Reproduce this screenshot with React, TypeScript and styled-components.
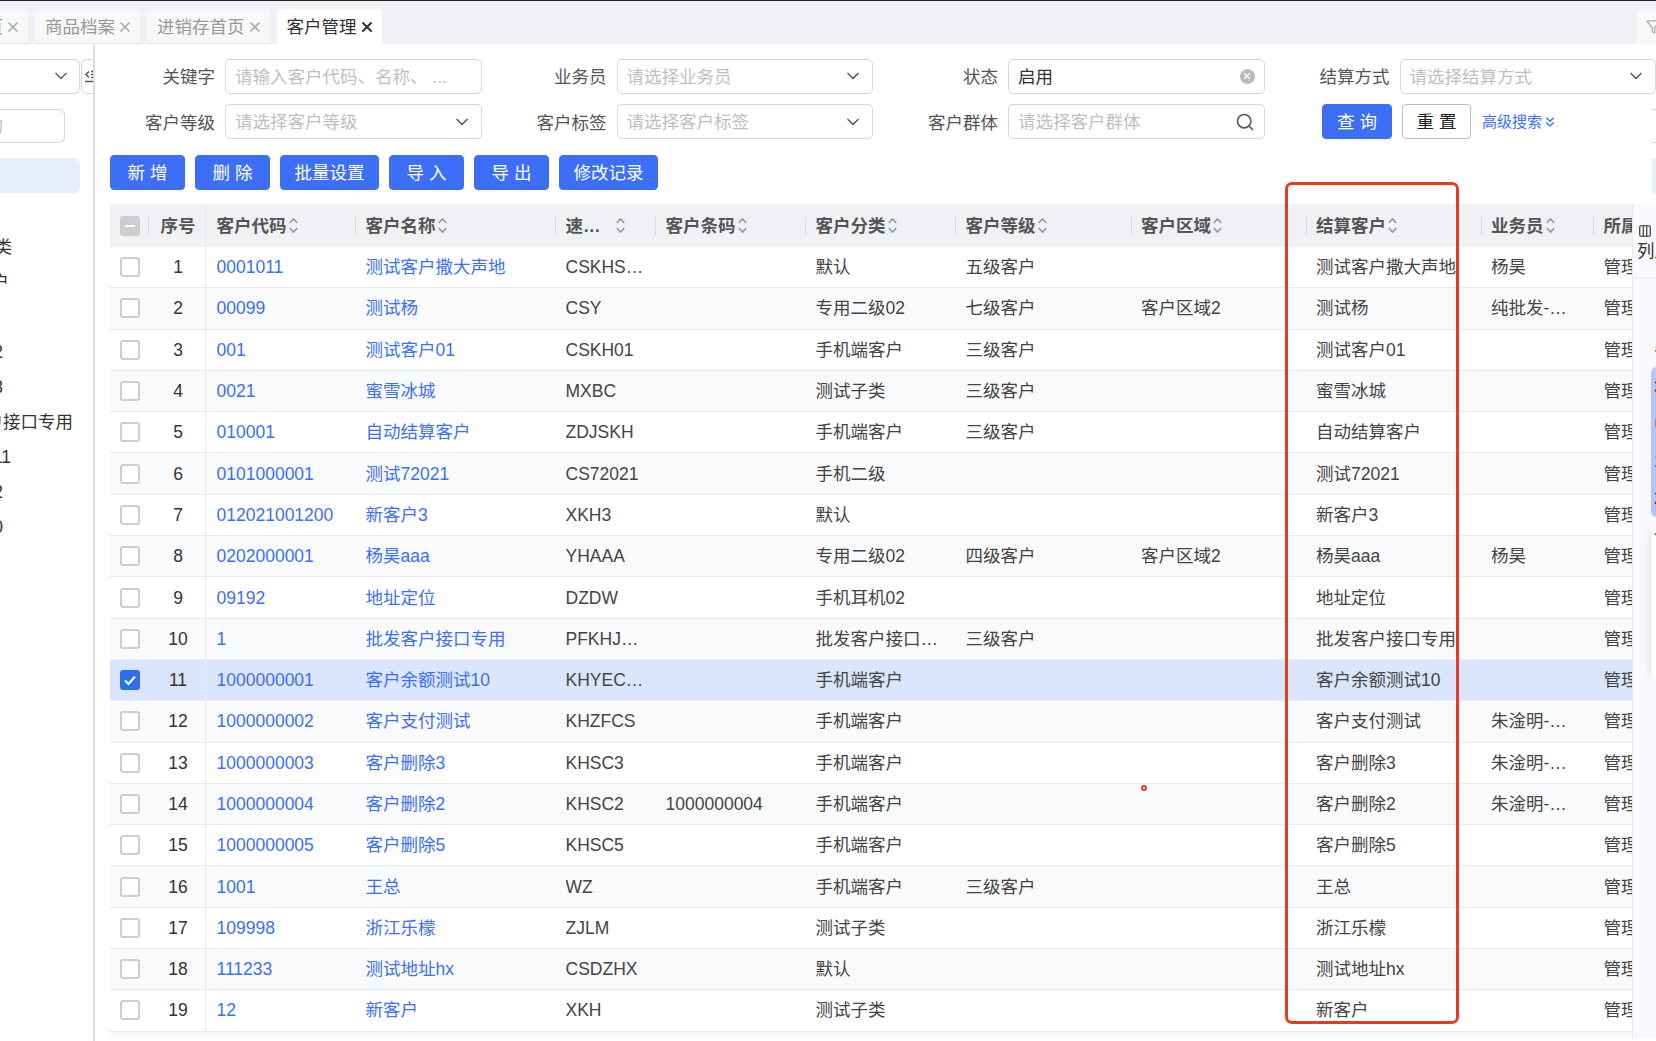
import styled, { createGlobalStyle } from "styled-components"
import { ChevronDown, ChevronsDown, Columns3, Filter, Search, X } from "lucide-react"

const Colors = {
  Blue: "#3c6ff5",
  Line: "#e8e9eb",
  Border: "#d6d6d6",
  HeadBg: "#f0f1f4",
  Stripe: "#f9fafb",
  Selected: "#dbe5fd",
  Placeholder: "#bfbfbf",
  Text: "#444",
  Red: "#e23d20",
}

const GlobalStyle = createGlobalStyle`
  html, body {
    margin: 0;
    height: 100%;
    overflow: hidden;
    background: #fff;
  }
  * { box-sizing: border-box; }
`

const Page = styled.div`
  width: 1656px;
  height: 1041px;
  overflow: hidden;
  display: flex;
  flex-direction: column;
  border-top: 1px solid #222;
  color: ${Colors.Text};
  font-family: "Liberation Sans", "Noto Sans CJK SC", sans-serif;
  font-size: 17.5px;
  line-height: 20px;
`

const TabBar = styled.div`
  height: 43px;
  flex-shrink: 0;
  display: flex;
  align-items: flex-end;
  gap: 7px;
  background: ${Colors.HeadBg};
`

const Tab = styled.div<{ $active?: boolean; $first?: boolean }>`
  height: 35px;
  flex-shrink: 0;
  display: flex;
  align-items: center;
  gap: 2px;
  padding: 1px 7px 0 10px;
  margin-left: ${props => props.$first ? -42 : 0}px;
  border-radius: 4px 4px 0 0;
  white-space: nowrap;
  background: ${props => props.$active ? "#fff" : "#f7f8f9"};
  border-bottom: 1px solid ${props => props.$active ? "#fff" : "#e4e5e7"};
  color: ${props => props.$active ? "#333" : "#999"};
  svg { color: ${props => props.$active ? "#333" : "#aaa"}; }
`

const FilterTab = styled.div`
  width: 19px;
  height: 35px;
  margin-left: auto;
  padding-left: 9px;
  display: flex;
  align-items: center;
  overflow: hidden;
  flex-shrink: 0;
  background: #f7f8f9;
  border-radius: 4px 0 0 0;
  color: #aaa;
  svg { flex-shrink: 0; }
`

const Body = styled.div`
  flex: 1;
  min-height: 0;
  display: flex;
`

const SidePanel = styled.aside`
  width: 95px;
  flex-shrink: 0;
  overflow: hidden;
  padding-top: 15px;
  display: flex;
  flex-direction: column;
  border-right: 2px solid #dcdcdc;
`

const SideTop = styled.div`
  display: flex;
  gap: 1px;
`

const SideSelect = styled.div`
  width: 80px;
  height: 34.5px;
  flex-shrink: 0;
  padding-right: 8px;
  display: flex;
  align-items: center;
  justify-content: flex-end;
  border: 1px solid ${Colors.Border};
  border-left: none;
  border-radius: 0 6px 6px 0;
  color: #666;
`

const CollapseButton = styled.div`
  width: 20px;
  height: 34.5px;
  flex-shrink: 0;
  padding-left: 3px;
  display: flex;
  align-items: center;
  border: 1px solid ${Colors.Border};
  border-radius: 6px;
  svg { flex-shrink: 0; }
`

const SideSearch = styled.div`
  width: 65px;
  height: 34.5px;
  margin-top: 15px;
  display: flex;
  align-items: center;
  justify-content: flex-end;
  overflow: hidden;
  padding-right: 61px;
  border: 1px solid ${Colors.Border};
  border-left: none;
  border-radius: 0 6px 6px 0;
  color: ${Colors.Placeholder};
  white-space: nowrap;
  span { flex-shrink: 0; }
`

const SideActive = styled.div`
  width: 80px;
  height: 35px;
  margin-top: 15px;
  background: #e8edfc;
  border-radius: 0 6px 6px 0;
`

const SideTree = styled.div`
  margin-top: 36px;
  display: flex;
  flex-direction: column;
`

const TreeItem = styled.div<{ $right: number }>`
  width: ${props => props.$right}px;
  height: 35px;
  display: flex;
  align-items: center;
  justify-content: flex-end;
  white-space: nowrap;
  color: #333;
  span { flex-shrink: 0; }
`

const Main = styled.main`
  position: relative;
  flex: 1;
  min-width: 0;
  padding: 15px 0 0 10px;
  display: flex;
  flex-direction: column;
`

const FilterForm = styled.div`
  display: grid;
  grid-template-columns: repeat(4, 376.5px);
  column-gap: 15px;
  row-gap: 10.5px;
`

const Field = styled.div`
  display: flex;
  align-items: center;
  gap: 10px;
`

const FieldLabel = styled.label`
  width: 110px;
  flex-shrink: 0;
  padding-top: 2px;
  text-align: right;
  color: #555;
  white-space: nowrap;
`

const Control = styled.div<{ $empty?: boolean }>`
  width: 256.5px;
  height: 34.5px;
  padding: 1.5px 9px 0 9px;
  flex-shrink: 0;
  display: flex;
  align-items: center;
  justify-content: space-between;
  gap: 6px;
  background: #fff;
  border: 1px solid ${Colors.Border};
  border-radius: 5px;
  color: ${props => props.$empty ? Colors.Placeholder : "#333"};
  white-space: nowrap;
  svg { flex-shrink: 0; color: #5c5c5c; margin-top: -1.5px; }
`

const ClearIcon = styled.span`
  width: 15px;
  height: 15px;
  margin-top: -1.5px;
  display: flex;
  align-items: center;
  justify-content: center;
  border-radius: 50%;
  background: #bbb;
  svg { color: #fff; margin: 0; }
`

const FormActions = styled.div`
  display: flex;
  align-items: center;
  padding-left: 42.5px;
`

const Button = styled.button<{ $outline?: boolean }>`
  height: 35px;
  min-width: 75px;
  padding: 1px 13.5px 0;
  border: 1px solid ${props => props.$outline ? "#bdbdbd" : Colors.Blue};
  border-radius: 4px;
  background: ${props => props.$outline ? "#fff" : Colors.Blue};
  color: ${props => props.$outline ? "#222" : "#fff"};
  font: inherit;
  white-space: nowrap;
`

const Spaced = styled.span`
  letter-spacing: 5px;
  margin-right: -5px;
`

const QueryButton = styled(Button)`
  min-width: 70px;
  margin-right: 10px;
`

const ResetButton = styled(Button)`
  min-width: 68px;
  margin-right: 11px;
`

const AdvancedLink = styled.a`
  display: flex;
  align-items: center;
  font-size: 15px;
  color: ${Colors.Blue};
  white-space: nowrap;
`

const Toolbar = styled.div`
  margin: 15.5px 0 0 5px;
  display: flex;
  gap: 10px;
`

const TableArea = styled.div`
  flex: 1;
  min-height: 0;
  margin: 14.5px 0 3px 5px;
  display: flex;
`

const Table = styled.div`
  width: 1522px;
  flex-shrink: 0;
  overflow: hidden;
`

const columns = "38px 57px 150px 200px 100px 150px 150px 175.5px 175px 175px 112.5px 39px"

const HeadRow = styled.div`
  height: 43px;
  display: grid;
  grid-template-columns: ${columns};
  background: ${Colors.HeadBg};
`

const HeadCell = styled.div<{ $divider?: boolean; $full?: boolean; $center?: boolean }>`
  position: relative;
  min-width: 0;
  display: flex;
  align-items: center;
  gap: 1px;
  padding-left: ${props => props.$center ? 3 : 10.5}px;
  justify-content: ${props => props.$center ? "center" : "flex-start"};
  overflow: hidden;
  white-space: nowrap;
  font-weight: 700;
  color: #555;
  border-left: ${props => props.$full ? `1px solid ${Colors.Line}` : "none"};
  &::before {
    content: "";
    display: ${props => props.$divider ? "block" : "none"};
    position: absolute;
    left: 0;
    top: 13px;
    width: 1px;
    height: 17px;
    background: #d9d9d9;
  }
`

const CheckHead = styled(HeadCell)`
  padding-left: 10px;
`

const ShortLabel = styled.span`
  width: 46px;
  flex-shrink: 0;
  overflow: hidden;
  text-overflow: ellipsis;
  margin-right: 2px;
`

const Row = styled.div<{ $selected?: boolean; $striped?: boolean }>`
  height: 41.3px;
  display: grid;
  grid-template-columns: ${columns};
  border-bottom: 1px solid ${Colors.Line};
  background: ${props => props.$selected ? Colors.Selected : props.$striped ? Colors.Stripe : "#fff"};
`

const Cell = styled.div<{ $divider?: boolean; $narrow?: boolean }>`
  min-width: 0;
  display: flex;
  align-items: center;
  padding: 0 ${props => props.$narrow ? 24 : 8}px 0 10.5px;
  overflow: hidden;
  border-left: ${props => props.$divider ? `1px solid ${Colors.Line}` : "none"};
`

const CellText = styled.span`
  overflow: hidden;
  text-overflow: ellipsis;
  white-space: nowrap;
`

const Clipped = styled.span`
  white-space: nowrap;
  flex-shrink: 0;
`

const LinkText = styled(CellText)`
  color: ${Colors.Blue};
`

const CheckCell = styled.div`
  display: flex;
  align-items: center;
  padding-left: 10px;
`

const SeqCell = styled.div`
  display: flex;
  align-items: center;
  justify-content: center;
  padding-left: 3px;
  color: #333;
`

const Checkbox = styled.span<{ $checked?: boolean; $mixed?: boolean }>`
  width: 20px;
  height: 20px;
  display: flex;
  align-items: center;
  justify-content: center;
  border-radius: 3px;
  border: 2px solid ${props => props.$checked ? "#2f6df0" : "#cdcdcd"};
  background: ${props => props.$checked ? "#2f6df0" : props.$mixed ? "#cdcdcd" : "#fff"};
`

const ColumnStrip = styled.div`
  position: relative;
  flex: 1;
  min-width: 0;
  overflow: hidden;
  background: #f8f9fd;
  border-left: 1px solid ${Colors.Line};
`

const StripHead = styled.div`
  height: 74px;
  padding: 20px 0 0 4px;
  border-bottom: 1px solid ${Colors.Line};
  white-space: nowrap;
  color: #333;
  line-height: 22px;
  svg { display: block; margin: 0 0 2px 1px; }
`

const StripBar = styled.div`
  position: absolute;
  left: 18px;
  top: 163px;
  width: 6px;
  height: 150px;
  background: #b3c3fb;
  border-radius: 6px 0 0 6px;
`

const StripCard = styled.div`
  position: absolute;
  left: 18px;
  top: 326px;
  width: 6px;
  height: 147px;
  background: #fff;
  border-radius: 6px 0 0 6px;
  box-shadow: -2px 0 6px rgba(60, 70, 110, 0.12);
`

const StripLabels = styled.div`
  position: absolute;
  left: 21px;
  top: 128px;
  display: flex;
  flex-direction: column;
  color: #333;
  line-height: 37px;
  white-space: nowrap;
`

const EdgeBox = styled.div`
  position: absolute;
  right: 0;
  top: 65px;
  width: 4px;
  height: 34px;
  background: #fff;
  border-top: 1px solid ${Colors.Border};
  border-bottom: 1px solid ${Colors.Border};
`

const EdgeActive = styled.div`
  position: absolute;
  right: 0;
  top: 115px;
  width: 4px;
  height: 35px;
  background: #e8edfc;
`

const Highlight = styled.div`
  position: absolute;
  left: 1189.5px;
  top: 138px;
  width: 174.5px;
  height: 842px;
  border: 3.5px solid ${Colors.Red};
  border-radius: 7px;
  pointer-events: none;
`

const CursorDot = styled.div`
  position: absolute;
  left: 1046px;
  top: 741px;
  width: 6px;
  height: 6px;
  border: 2px solid ${Colors.Red};
  border-radius: 50%;
`

const SortIcon = () => (
  <svg width="11" height="19" viewBox="0 0 10 18" fill="none" stroke="#999" strokeWidth="1.5" style={{ flexShrink: 0 }}>
    <path d="M1.5 6.5 5 2.8l3.5 3.7" />
    <path d="M1.5 11.5 5 15.2l3.5-3.7" />
  </svg>
)

const CollapseIcon = () => (
  <svg width="16" height="16" viewBox="0 0 16 16" fill="none" stroke="#555" strokeWidth="1.6">
    <path d="M4 3.5.9 6.5 4 9.5" />
    <path d="M6 3.5h9M6 6.5h9M6 9.5h9M0 13.5h15" />
  </svg>
)

const ClearGlyph = () => (
  <ClearIcon>
    <X size={10} strokeWidth={3} />
  </ClearIcon>
)

interface Customer {
  code: string
  name: string
  quick: string
  barcode?: string
  category: string
  grade?: string
  area?: string
  settle: string
  sales?: string
}

const customers: Customer[] = [
  { code: "0001011", name: "测试客户撒大声地", quick: "CSKHSDSD", category: "默认", grade: "五级客户", settle: "测试客户撒大声地", sales: "杨昊" },
  { code: "00099", name: "测试杨", quick: "CSY", category: "专用二级02", grade: "七级客户", area: "客户区域2", settle: "测试杨", sales: "纯批发-测试员" },
  { code: "001", name: "测试客户01", quick: "CSKH01", category: "手机端客户", grade: "三级客户", settle: "测试客户01" },
  { code: "0021", name: "蜜雪冰城", quick: "MXBC", category: "测试子类", grade: "三级客户", settle: "蜜雪冰城" },
  { code: "010001", name: "自动结算客户", quick: "ZDJSKH", category: "手机端客户", grade: "三级客户", settle: "自动结算客户" },
  { code: "0101000001", name: "测试72021", quick: "CS72021", category: "手机二级", settle: "测试72021" },
  { code: "012021001200", name: "新客户3", quick: "XKH3", category: "默认", settle: "新客户3" },
  { code: "0202000001", name: "杨昊aaa", quick: "YHAAA", category: "专用二级02", grade: "四级客户", area: "客户区域2", settle: "杨昊aaa", sales: "杨昊" },
  { code: "09192", name: "地址定位", quick: "DZDW", category: "手机耳机02", settle: "地址定位" },
  { code: "1", name: "批发客户接口专用", quick: "PFKHJKZY", category: "批发客户接口专用", grade: "三级客户", settle: "批发客户接口专用" },
  { code: "1000000001", name: "客户余额测试10", quick: "KHYECS10", category: "手机端客户", settle: "客户余额测试10" },
  { code: "1000000002", name: "客户支付测试", quick: "KHZFCS", category: "手机端客户", settle: "客户支付测试", sales: "朱淦明-测试" },
  { code: "1000000003", name: "客户删除3", quick: "KHSC3", category: "手机端客户", settle: "客户删除3", sales: "朱淦明-测试" },
  { code: "1000000004", name: "客户删除2", quick: "KHSC2", barcode: "1000000004", category: "手机端客户", settle: "客户删除2", sales: "朱淦明-测试" },
  { code: "1000000005", name: "客户删除5", quick: "KHSC5", category: "手机端客户", settle: "客户删除5" },
  { code: "1001", name: "王总", quick: "WZ", category: "手机端客户", grade: "三级客户", settle: "王总" },
  { code: "109998", name: "浙江乐檬", quick: "ZJLM", category: "测试子类", settle: "浙江乐檬" },
  { code: "111233", name: "测试地址hx", quick: "CSDZHX", category: "默认", settle: "测试地址hx" },
  { code: "12", name: "新客户", quick: "XKH", category: "测试子类", settle: "新客户" },
]

const sortableColumns = ["客户条码", "客户分类", "客户等级", "客户区域", "结算客户", "业务员"]

const App = () => {
  return (
    <Page>
      <GlobalStyle />
      <TabBar>
        <Tab $first>首页<X size={16} strokeWidth={2.5} /></Tab>
        <Tab>商品档案<X size={16} strokeWidth={2.5} /></Tab>
        <Tab>进销存首页<X size={16} strokeWidth={2.5} /></Tab>
        <Tab $active>客户管理<X size={16} strokeWidth={3} /></Tab>
        <FilterTab><Filter size={15} /></FilterTab>
      </TabBar>
      <Body>
        <SidePanel>
          <SideTop>
            <SideSelect><ChevronDown size={20} /></SideSelect>
            <CollapseButton><CollapseIcon /></CollapseButton>
          </SideTop>
          <SideSearch><span>请输入查询</span></SideSearch>
          <SideActive />
          <SideTree>
            <TreeItem $right={12}><span>客户分类</span></TreeItem>
            <TreeItem $right={9}><span>零售客户</span></TreeItem>
            <TreeItem $right={0} />
            <TreeItem $right={3}><span>专用二级02</span></TreeItem>
            <TreeItem $right={3}><span>手机二级03</span></TreeItem>
            <TreeItem $right={73}><span>批发客户接口专用</span></TreeItem>
            <TreeItem $right={11}><span>手机耳机11</span></TreeItem>
            <TreeItem $right={3}><span>手机耳机02</span></TreeItem>
            <TreeItem $right={3}><span>测试客户10</span></TreeItem>
          </SideTree>
        </SidePanel>
        <Main>
          <FilterForm>
            <Field>
              <FieldLabel>关键字</FieldLabel>
              <Control $empty>请输入客户代码、名称、 ...</Control>
            </Field>
            <Field>
              <FieldLabel>业务员</FieldLabel>
              <Control $empty>请选择业务员<ChevronDown size={20} /></Control>
            </Field>
            <Field>
              <FieldLabel>状态</FieldLabel>
              <Control>启用<ClearGlyph /></Control>
            </Field>
            <Field>
              <FieldLabel>结算方式</FieldLabel>
              <Control $empty>请选择结算方式<ChevronDown size={20} /></Control>
            </Field>
            <Field>
              <FieldLabel>客户等级</FieldLabel>
              <Control $empty>请选择客户等级<ChevronDown size={20} /></Control>
            </Field>
            <Field>
              <FieldLabel>客户标签</FieldLabel>
              <Control $empty>请选择客户标签<ChevronDown size={20} /></Control>
            </Field>
            <Field>
              <FieldLabel>客户群体</FieldLabel>
              <Control $empty>请选择客户群体<Search size={20} /></Control>
            </Field>
            <FormActions>
              <QueryButton><Spaced>查询</Spaced></QueryButton>
              <ResetButton $outline><Spaced>重置</Spaced></ResetButton>
              <AdvancedLink>高级搜索<ChevronsDown size={16} /></AdvancedLink>
            </FormActions>
          </FilterForm>
          <EdgeBox />
          <EdgeActive />
          <Toolbar>
            <Button><Spaced>新增</Spaced></Button>
            <Button><Spaced>删除</Spaced></Button>
            <Button>批量设置</Button>
            <Button><Spaced>导入</Spaced></Button>
            <Button><Spaced>导出</Spaced></Button>
            <Button>修改记录</Button>
          </Toolbar>
          <TableArea>
            <Table>
              <HeadRow>
                <CheckHead><Checkbox $mixed><svg width="12" height="12" viewBox="0 0 12 12"><path d="M1 6h10" stroke="#fff" strokeWidth="2" /></svg></Checkbox></CheckHead>
                <HeadCell $divider $center>序号</HeadCell>
                <HeadCell $full>客户代码<SortIcon /></HeadCell>
                <HeadCell $divider>客户名称<SortIcon /></HeadCell>
                <HeadCell $divider><ShortLabel>速记码搜索</ShortLabel><SortIcon /></HeadCell>
                {sortableColumns.map(title => (
                  <HeadCell $divider key={title}>{title}<SortIcon /></HeadCell>
                ))}
                <HeadCell $divider><Clipped>所属</Clipped></HeadCell>
              </HeadRow>
              {customers.map((customer, index) => (
                <Row key={customer.code} $selected={index === 10} $striped={index % 2 === 1}>
                  <CheckCell>
                    <Checkbox $checked={index === 10}>
                      {index === 10 && <svg width="14" height="14" viewBox="0 0 14 14" fill="none"><path d="M2 7.5 5.6 11 12 3.5" stroke="#fff" strokeWidth="2.2" /></svg>}
                    </Checkbox>
                  </CheckCell>
                  <SeqCell>{index + 1}</SeqCell>
                  <Cell $divider><LinkText>{customer.code}</LinkText></Cell>
                  <Cell><LinkText>{customer.name}</LinkText></Cell>
                  <Cell><CellText>{customer.quick}</CellText></Cell>
                  <Cell><CellText>{customer.barcode}</CellText></Cell>
                  <Cell><CellText>{customer.category}</CellText></Cell>
                  <Cell><CellText>{customer.grade}</CellText></Cell>
                  <Cell><CellText>{customer.area}</CellText></Cell>
                  <Cell><Clipped>{customer.settle}</Clipped></Cell>
                  <Cell $narrow><CellText>{customer.sales}</CellText></Cell>
                  <Cell><Clipped>管理</Clipped></Cell>
                </Row>
              ))}
              <Row $striped />
            </Table>
            <ColumnStrip>
              <StripHead>
                <Columns3 size={14} strokeWidth={2} />
                列展示
              </StripHead>
              <StripBar />
              <StripCard />
              <StripLabels>
                <span>冬</span>
                <span>3</span>
                <span>中</span>
                <span>1</span>
                <span>2</span>
                <span>一</span>
              </StripLabels>
            </ColumnStrip>
          </TableArea>
          <Highlight />
          <CursorDot />
        </Main>
      </Body>
    </Page>
  )
}

export default App
